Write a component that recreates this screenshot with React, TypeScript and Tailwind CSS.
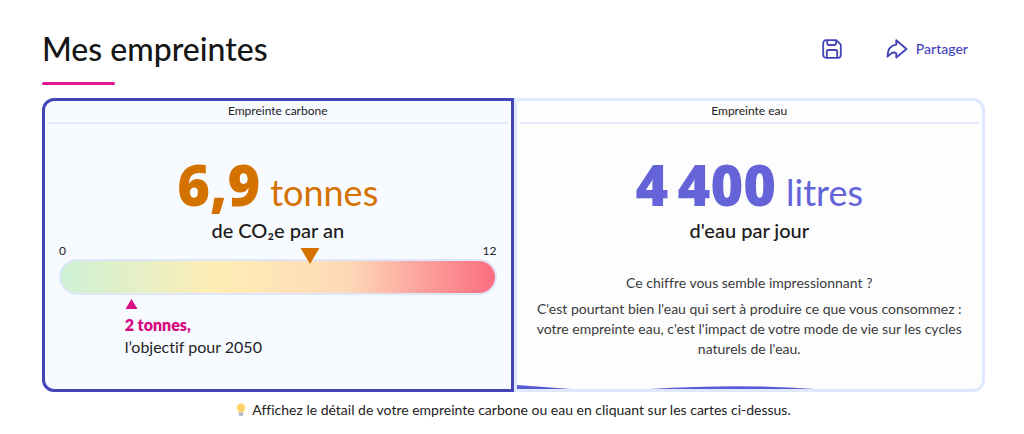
import React, { useState } from "react";

type Footprint = "carbone" | "eau";

const MAX_TONNES = 12;

const SaveIcon = () => (
  <svg width="20" height="20" viewBox="0 0 20 20" fill="none" stroke="currentColor" strokeWidth="1.8" strokeLinejoin="round">
    <path d="M4 1.2h10.2l4.6 4.4V16a2.8 2.8 0 0 1-2.8 2.8H4A2.8 2.8 0 0 1 1.2 16V4A2.8 2.8 0 0 1 4 1.2Z" />
    <path d="M5.2 1.4v3.2a1.4 1.4 0 0 0 1.4 1.4h6a1.4 1.4 0 0 0 1.4-1.4V1.4" />
    <path d="M4.8 18.6v-6a1.6 1.6 0 0 1 1.6-1.6h7.2a1.6 1.6 0 0 1 1.6 1.6v6" />
  </svg>
);

const ShareIcon = () => (
  <svg width="22" height="20" viewBox="0 0 22 20" fill="none" stroke="currentColor" strokeWidth="1.9" strokeLinejoin="round">
    <path d="M10.3 1.2 20.5 10 10.3 18.500v-4.300c-1.600-1-3.200-.9-4.800 0-1.500.9-2.200 2-4 3.300C1.500 11 4.600 6.400 10.300 5.600Z" />
  </svg>
);

const BulbIcon = () => (
  <svg width="10" height="14" viewBox="0 0 10 14" aria-hidden="true">
    <path d="M5 .5a4.2 4.2 0 0 0-4.3 4.200C.7 6.800 2.500 7.600 2.700 9.500h4.600c.2-1.900 2-2.700 2-4.800A4.200 4.200 0 0 0 5 .5Z" fill="#ffd469" />
    <path d="M2.8 9.500h4.400v2.300L6.200 13H3.800l-1-1.200Z" fill="#a9bccb" />
  </svg>
);

const CardTitle = ({ children }: { children: React.ReactNode }) => (
  <span className="mx-[3px] block border-b-2 border-[#e2e9fc] pb-px text-center text-[12px] leading-[20px] text-[#222]">
    {children}
  </span>
);

interface FigureProps {
  value: string;
  unit: string;
  caption: string;
  color: string;
}

const Figure = ({ value, unit, caption, color }: FigureProps) => (
  <span className="mt-8 block text-center">
    <span className={`flex items-baseline justify-center gap-[10px] ${color}`}>
      <span className="font-['Open_Sans',sans-serif] text-[56px] leading-[56px] font-extrabold">{value}</span>
      <span className="text-[36px] leading-[56px]">{unit}</span>
    </span>
    <span className="block text-[20px] leading-[20px] font-medium text-[#1a1a1a]">{caption}</span>
  </span>
);

const Gauge = ({ tonnes, target }: { tonnes: number; target: number }) => (
  <span className="mx-[14px] mt-[3px] block">
    <span className="flex justify-between text-[12px] leading-[16px] text-[#222]">
      <span>0</span>
      <span>{MAX_TONNES}</span>
    </span>
    <span className="relative block h-9 rounded-full border-2 border-[#dde6fb] bg-[linear-gradient(90deg,#cdf1d5_0%,#ffedb5_36%,#fed9b8_66%,#fb6d80_100%)]">
      <svg
        className="absolute -top-[14px] -translate-x-1/2"
        style={{ left: `${(tonnes / MAX_TONNES) * 100}%` }}
        width="22" height="18" viewBox="0 0 22 18"
      >
        <path d="M1.5 1h19L11 17Z" fill="#d47200" />
      </svg>
    </span>
    <span className="block" style={{ paddingLeft: `${(target / MAX_TONNES) * 90}%` }}>
      <svg className="mt-1 block" width="13" height="10" viewBox="0 0 13 10">
        <path d="M6.5 0 12.5 10H.5Z" fill="#d90f85" />
      </svg>
      <span className="mt-[5px] block text-[16px] leading-[22px] text-[#1f1f1f]">
        <strong className="block font-extrabold text-[#d6087f]">{target} tonnes,</strong>
        l’objectif pour 2050
      </span>
    </span>
  </span>
);

const App = () => {
  const [selected, setSelected] = useState<Footprint>("carbone");

  const frame = (name: Footprint) =>
    selected === name ? "border-[#4444b9] bg-[#f7faff]" : "border-[#dfe8ff] bg-[#fdfdfe]";

  return (
    <main className="min-h-screen bg-white pt-7 pr-[39px] pl-[42px] font-['Lato',sans-serif] text-[#161616] [font-variant-ligatures:none]">
      <header className="flex items-start justify-between">
        <div>
          <h1 className="text-[32px] leading-[42px] font-medium">Mes empreintes</h1>
          <div className="mt-[12px] h-[3px] w-[73px] rounded-full bg-[#e5159a]" />
        </div>
        <div className="mr-[17px] flex h-[42px] items-center gap-11 text-[#4444b9]">
          <button type="button" aria-label="Sauvegarder" className="cursor-pointer">
            <SaveIcon />
          </button>
          <button type="button" className="flex cursor-pointer items-center gap-2 text-[14px] leading-[20px] font-medium">
            <ShareIcon />
            Partager
          </button>
        </div>
      </header>

      <div className="mt-[13px] grid grid-cols-2">
        <button
          type="button"
          onClick={() => setSelected("carbone")}
          className={`flex min-h-[294px] cursor-pointer flex-col items-stretch rounded-l-xl border-3 text-left ${frame("carbone")}`}
        >
          <CardTitle>Empreinte carbone</CardTitle>
          <Figure value="6,9" unit="tonnes" caption="de CO₂e par an" color="text-[#d47200]" />
          <Gauge tonnes={6.9} target={2} />
        </button>

        <button
          type="button"
          onClick={() => setSelected("eau")}
          className={`relative flex min-h-[294px] cursor-pointer flex-col items-stretch overflow-hidden rounded-r-xl border-3 text-center ${frame("eau")}`}
        >
          <CardTitle>Empreinte eau</CardTitle>
          <Figure value={"4\u2009400"} unit="litres" caption="d'eau par jour" color="text-[#6464d8]" />
          <span className="mt-[33px] block px-3 text-[14px] leading-[20px] text-[#3a3a3a]">
            <span className="mb-[6px] block">Ce chiffre vous semble impressionnant ?</span>
            C'est pourtant bien l'eau qui sert à produire ce que vous consommez : votre empreinte
            eau, c'est l'impact de votre mode de vie sur les cycles naturels de l'eau.
          </span>
          {/* water level */}
          <svg
            className="absolute bottom-0 left-0 h-1 w-full"
            viewBox="0 0 465 4"
            preserveAspectRatio="none"
            fill="#5b5bd6"
          >
            <path d="M0 0Q27 2 54 4H0Z" />
            <path d="M132 4Q225 -1.5 298 4Z" />
          </svg>
        </button>
      </div>

      <p className="mt-2 flex items-center justify-center gap-[6px] text-[14px] leading-[20px] text-[#222]">
        <BulbIcon />
        Affichez le détail de votre empreinte carbone ou eau en cliquant sur les cartes ci-dessus.
      </p>
    </main>
  );
};

export default App;
